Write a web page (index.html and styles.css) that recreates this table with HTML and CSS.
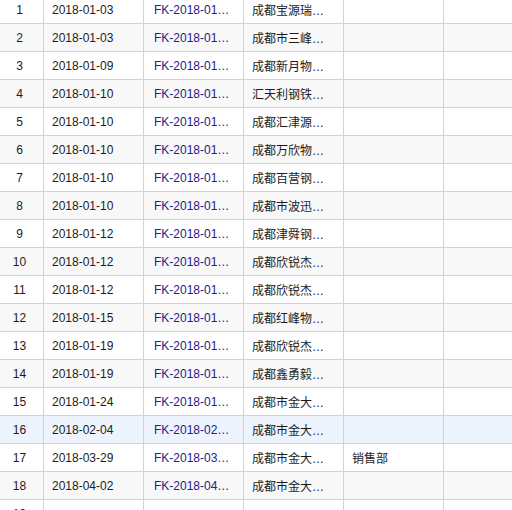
FILE: index.html
```html
<!DOCTYPE html>
<html>
<head>
<meta charset="utf-8">
<link rel="stylesheet" href="styles.css">
</head>
<body>
<div class="grid">
<table class="tbl">
<colgroup><col class="c-num"><col class="c-w"><col class="c-w"><col class="c-w"><col class="c-w"><col class="c-w"></colgroup>
<tbody>
<tr><td class="num">1</td><td>2018-01-03</td><td class="link">FK-2018-01…</td><td>成都宝源瑞…</td><td></td><td></td></tr>
<tr class="alt"><td class="num">2</td><td>2018-01-03</td><td class="link">FK-2018-01…</td><td>成都市三峰…</td><td></td><td></td></tr>
<tr><td class="num">3</td><td>2018-01-09</td><td class="link">FK-2018-01…</td><td>成都新月物…</td><td></td><td></td></tr>
<tr class="alt"><td class="num">4</td><td>2018-01-10</td><td class="link">FK-2018-01…</td><td>汇天利钢铁…</td><td></td><td></td></tr>
<tr><td class="num">5</td><td>2018-01-10</td><td class="link">FK-2018-01…</td><td>成都汇津源…</td><td></td><td></td></tr>
<tr class="alt"><td class="num">6</td><td>2018-01-10</td><td class="link">FK-2018-01…</td><td>成都万欣物…</td><td></td><td></td></tr>
<tr><td class="num">7</td><td>2018-01-10</td><td class="link">FK-2018-01…</td><td>成都百营钢…</td><td></td><td></td></tr>
<tr class="alt"><td class="num">8</td><td>2018-01-10</td><td class="link">FK-2018-01…</td><td>成都市波迅…</td><td></td><td></td></tr>
<tr><td class="num">9</td><td>2018-01-12</td><td class="link">FK-2018-01…</td><td>成都津舜钢…</td><td></td><td></td></tr>
<tr class="alt"><td class="num">10</td><td>2018-01-12</td><td class="link">FK-2018-01…</td><td>成都欣锐杰…</td><td></td><td></td></tr>
<tr><td class="num">11</td><td>2018-01-12</td><td class="link">FK-2018-01…</td><td>成都欣锐杰…</td><td></td><td></td></tr>
<tr class="alt"><td class="num">12</td><td>2018-01-15</td><td class="link">FK-2018-01…</td><td>成都红峰物…</td><td></td><td></td></tr>
<tr><td class="num">13</td><td>2018-01-19</td><td class="link">FK-2018-01…</td><td>成都欣锐杰…</td><td></td><td></td></tr>
<tr class="alt"><td class="num">14</td><td>2018-01-19</td><td class="link">FK-2018-01…</td><td>成都鑫勇毅…</td><td></td><td></td></tr>
<tr><td class="num">15</td><td>2018-01-24</td><td class="link">FK-2018-01…</td><td>成都市金大…</td><td></td><td></td></tr>
<tr class="sel"><td class="num">16</td><td>2018-02-04</td><td class="link">FK-2018-02…</td><td>成都市金大…</td><td></td><td></td></tr>
<tr><td class="num">17</td><td>2018-03-29</td><td class="link">FK-2018-03…</td><td>成都市金大…</td><td>销售部</td><td></td></tr>
<tr class="alt"><td class="num">18</td><td>2018-04-02</td><td class="link">FK-2018-04…</td><td>成都市金大…</td><td></td><td></td></tr>
<tr><td class="num">19</td><td></td><td class="link"></td><td></td><td></td><td></td></tr>
</tbody>
</table>
</div>
</body>
</html>
```

FILE: styles.css
```css
html, body {
  margin: 0;
  padding: 0;
  background: #ffffff;
  overflow: hidden;
}
.grid {
  width: 512px;
  height: 510px;
  overflow: hidden;
}
.tbl {
  margin-top: -4px;
  border-collapse: separate;
  border-spacing: 0;
  table-layout: fixed;
  width: 544px;
  font-family: "Liberation Sans", "Noto Sans CJK SC", sans-serif;
  font-size: 12px;
  color: #1c1c1c;
}
.c-num { width: 44px; }
.c-w { width: 100px; }
.tbl td {
  height: 27px;
  padding: 0 4px 0 8px;
  border-right: 1px solid #d3d3d3;
  border-bottom: 1px solid #d3d3d3;
  white-space: nowrap;
  overflow: hidden;
  vertical-align: middle;
  box-sizing: content-box;
}
.tbl td.num {
  padding: 0 4px 0 0;
  text-align: center;
}
.tbl td.link {
  color: #22228a;
  padding-left: 10px;
}
.alt td { background: #f8f8f8; }
.sel td { background: #eef4fd; }
```
